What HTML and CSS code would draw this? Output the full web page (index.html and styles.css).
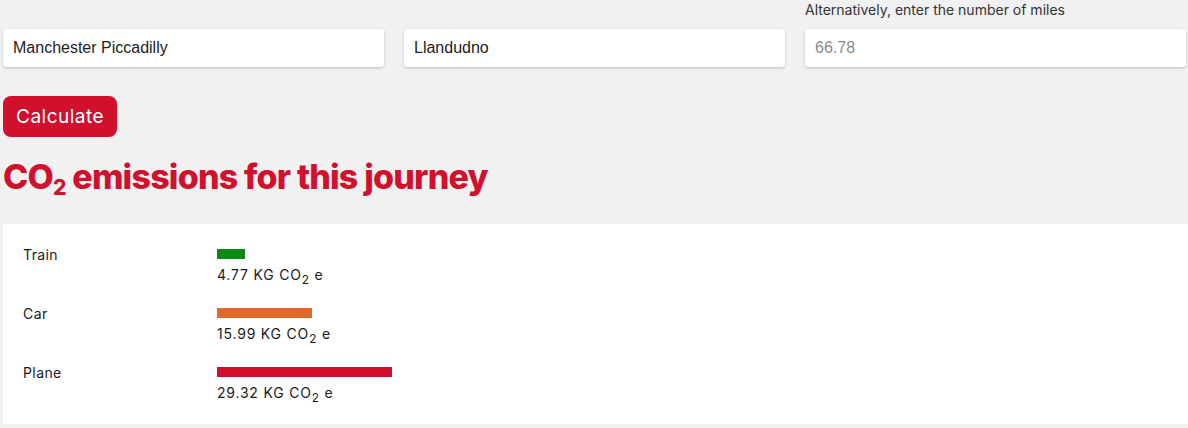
FILE: index.html
```html
<!DOCTYPE html>
<html lang="en">
<head>
    <meta charset="UTF-8">
    <meta name="viewport" content="width=device-width, initial-scale=1.0">
    <title>Journey emissions</title>
    <link rel="stylesheet" href="styles.css">
</head>
<body>
    <div class="fields">
        <div class="field">
            <input class="text-input" type="text" value="Manchester Piccadilly">
        </div>
        <div class="field">
            <input class="text-input" type="text" value="Llandudno">
        </div>
        <div class="field">
            <label class="field-label">Alternatively, enter the number of miles</label>
            <input class="text-input" type="text" placeholder="66.78">
        </div>
    </div>

    <button class="calc-btn">Calculate</button>

    <h2 class="title">CO<sub>2</sub> emissions for this journey</h2>

    <div class="results">
        <div class="row">
            <div class="mode">Train</div>
            <div class="value">
                <div class="bar bar-train" style="width: 28px"></div>
                <div>4.77 KG CO<sub>2</sub> e</div>
            </div>
        </div>
        <div class="row">
            <div class="mode">Car</div>
            <div class="value">
                <div class="bar bar-car" style="width: 95px"></div>
                <div>15.99 KG CO<sub>2</sub> e</div>
            </div>
        </div>
        <div class="row">
            <div class="mode">Plane</div>
            <div class="value">
                <div class="bar bar-plane" style="width: 175px"></div>
                <div>29.32 KG CO<sub>2</sub> e</div>
            </div>
        </div>
    </div>
</body>
</html>
```

FILE: styles.css
```css
body {
    font-family: 'Inter', sans-serif;
    background: #f1f1f1;
    margin: 0;
    padding: 0 0 0 3px;
    color: #1a1a1a;
}

.fields {
    display: grid;
    grid-template-columns: 381px 381px 381px;
    gap: 20px;
    align-items: end;
}

.field {
    display: flex;
    flex-direction: column;
}

.field-label {
    font-size: 14px;
    color: #333;
    margin-bottom: 9px;
    line-height: 20px;
}

.text-input {
    box-sizing: border-box;
    height: 38px;
    border: none;
    border-radius: 3px;
    background: white;
    box-shadow: 0 1px 3px rgba(0, 0, 0, 0.22);
    padding: 0 10px;
    font-family: 'Liberation Sans', Arial, sans-serif;
    font-size: 16px;
    color: #222;
}

.text-input::placeholder {
    color: #8a8a8a;
}

.calc-btn {
    display: block;
    margin-top: 29px;
    background: #d0102d;
    color: white;
    border: none;
    border-radius: 8px;
    padding: 0 13px;
    height: 41px;
    font-family: 'Inter', sans-serif;
    font-size: 19px;
    letter-spacing: 0.5px;
}

.title {
    color: #d0102d;
    font-size: 34px;
    font-weight: 800;
    margin: 17px 0 0;
    line-height: 46px;
    letter-spacing: -0.8px;
}

.title sub {
    font-size: 0.62em;
    vertical-align: -0.3em;
    line-height: 0;
}

.results {
    background: #fff;
    margin-top: 24px;
    padding: 22px 20px 22px;
    font-size: 14px;
    letter-spacing: 0.4px;
}

.row {
    display: grid;
    grid-template-columns: 194px auto;
    margin-bottom: 21px;
}

.row:last-child {
    margin-bottom: 0;
}

.mode {
    line-height: 18px;
}

.value {
    padding-top: 3px;
    line-height: 18px;
    letter-spacing: 0.8px;
}

.value sub {
    font-size: 0.85em;
    vertical-align: -0.35em;
    line-height: 0;
}

.bar {
    height: 10px;
    margin-bottom: 7px;
}

.bar-train {
    background: #0a8a12;
}

.bar-car {
    background: #e0692a;
}

.bar-plane {
    background: #d0102d;
}
```
